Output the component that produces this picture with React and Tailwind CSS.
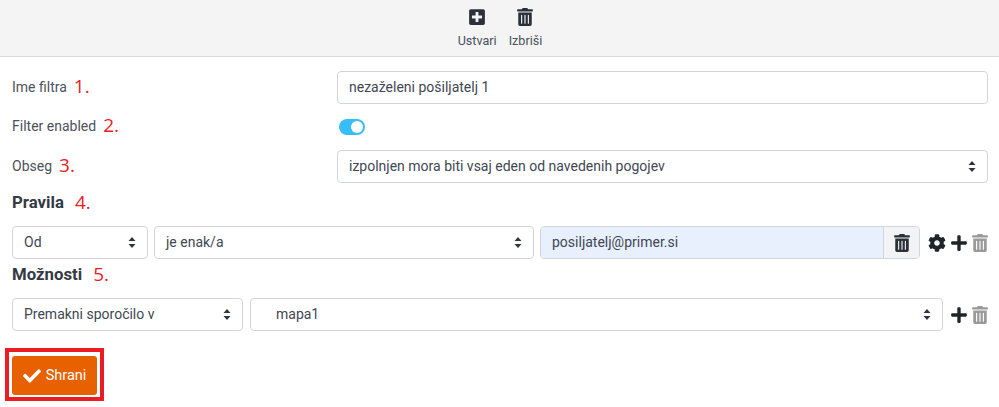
import { FaCheck, FaCog, FaPlus, FaPlusSquare, FaTrashAlt } from 'react-icons/fa';

const fieldClass = 'h-[33px] rounded border border-[#d3d5dd] bg-white text-[14px] text-[#3f4752] flex items-center';

const Note = ({ children, className = '' }) => (
  <span className={`font-['Open_Sans',sans-serif] text-[19px] leading-none font-normal text-[#ed1c24] mb-[2px] ${className}`}>{children}</span>
);

const Arrows = () => (
  <svg width="8" height="13" viewBox="0 0 8 13" className="shrink-0 text-[#2f3640]">
    <path d="M4 1 L7.5 5 H0.5 Z M4 12 L0.5 8 H7.5 Z" fill="currentColor" />
  </svg>
);

const SelectBox = ({ value, className = '', textClass = '' }) => (
  <div className={`${fieldClass} justify-between pl-[11px] pr-[11px] ${className}`}>
    <span className={textClass}>{value}</span>
    <Arrows />
  </div>
);

const FormRow = ({ label, note, children, className = '' }) => (
  <div className={`flex items-center ${className}`}>
    <div className="w-[325px] flex items-center gap-[7px] text-[14px] text-[#4a525c]">
      <span>{label}</span>
      <Note>{note}</Note>
    </div>
    <div className="w-[651px]">{children}</div>
  </div>
);

const SectionTitle = ({ title, note, className = '' }) => (
  <div className={`flex items-center gap-[11px] h-5 ${className}`}>
    <span className="text-[16.8px] font-bold text-[#343a43]">{title}</span>
    <Note>{note}</Note>
  </div>
);

const ToolButton = ({ icon: Icon, label }) => (
  <div className="flex flex-col items-center text-[12.6px] text-[#4a525c]">
    <Icon className="w-4 h-[18px] text-[#2b313a]" />
    <span className="mt-[8px] leading-[14px]">{label}</span>
  </div>
);

export default function App() {
  return (
    <div className="w-[999px] h-[407px] overflow-hidden bg-white font-['Roboto',sans-serif]">
      <div className="h-[57px] bg-[#f4f4f4] border-b border-[#d8dadd] flex justify-center gap-3 pt-2 pl-px">
        <ToolButton icon={FaPlusSquare} label="Ustvari" />
        <ToolButton icon={FaTrashAlt} label="Izbriši" />
      </div>

      <div className="pl-3 pt-[14px]">
        <FormRow label="Ime filtra" note="1.">
          <div className={`${fieldClass} px-[11px]`}>nezaželeni pošiljatelj 1</div>
        </FormRow>
        <FormRow label="Filter enabled" note="2." className="mt-[6px]">
          <div className="h-[33px] flex items-center pl-[2px]">
            <div className="w-[26px] h-4 rounded-full bg-[#38bdf8] flex items-center justify-end pr-[2px]">
              <div className="w-3 h-3 rounded-full bg-white" />
            </div>
          </div>
        </FormRow>
        <FormRow label="Obseg" note="3." className="mt-[7px]">
          <SelectBox value="izpolnjen mora biti vsaj eden od navedenih pogojev" />
        </FormRow>

        <SectionTitle title="Pravila" note="4." className="mt-[10px]" />
        <div className="flex items-center mt-[13px]">
          <SelectBox value="Od" className="w-[136px]" />
          <SelectBox value="je enak/a" className="w-[380px] ml-[6px]" />
          <div className="w-[380px] ml-[6px] h-[33px] flex rounded border border-[#d3d5dd] overflow-hidden text-[14px] text-[#3f4752]">
            <div className="flex-1 bg-[#e8f0fe] flex items-center px-[11px]">posiljatelj@primer.si</div>
            <div className="w-[36px] border-l border-[#d3d5dd] bg-[#f2f3f5] flex items-center justify-center">
              <FaTrashAlt className="w-4 h-[18px] text-[#2b313a]" />
            </div>
          </div>
          <FaCog className="w-[18px] h-[18px] ml-2 text-[#20252c]" />
          <FaPlus className="w-4 h-[18px] ml-[5px] text-[#20252c]" />
          <FaTrashAlt className="w-4 h-[18px] ml-[5px] text-[#9a9a9a]" />
        </div>

        <SectionTitle title="Možnosti" note="5." className="mt-[6px]" />
        <div className="flex items-center mt-[13px]">
          <SelectBox value="Premakni sporočilo v" className="w-[231px]" />
          <SelectBox value="mapa1" className="w-[693px] ml-[7px]" textClass="pl-[14px]" />
          <FaPlus className="w-4 h-[18px] ml-2 text-[#20252c]" />
          <FaTrashAlt className="w-4 h-[18px] ml-[5px] text-[#9a9a9a]" />
        </div>
      </div>

      <div className="w-[99px] h-[53px] ml-[5px] mt-[17px] border-4 border-[#ed1c24] bg-white px-[3px] pt-[4px]">
        <button className="w-[85px] h-[39px] rounded-[3px] bg-[#e86100] text-white text-[14.5px] font-normal flex items-center justify-center gap-[5px]">
          <FaCheck className="w-[18px] h-[18px]" />
          Shrani
        </button>
      </div>
    </div>
  );
}
